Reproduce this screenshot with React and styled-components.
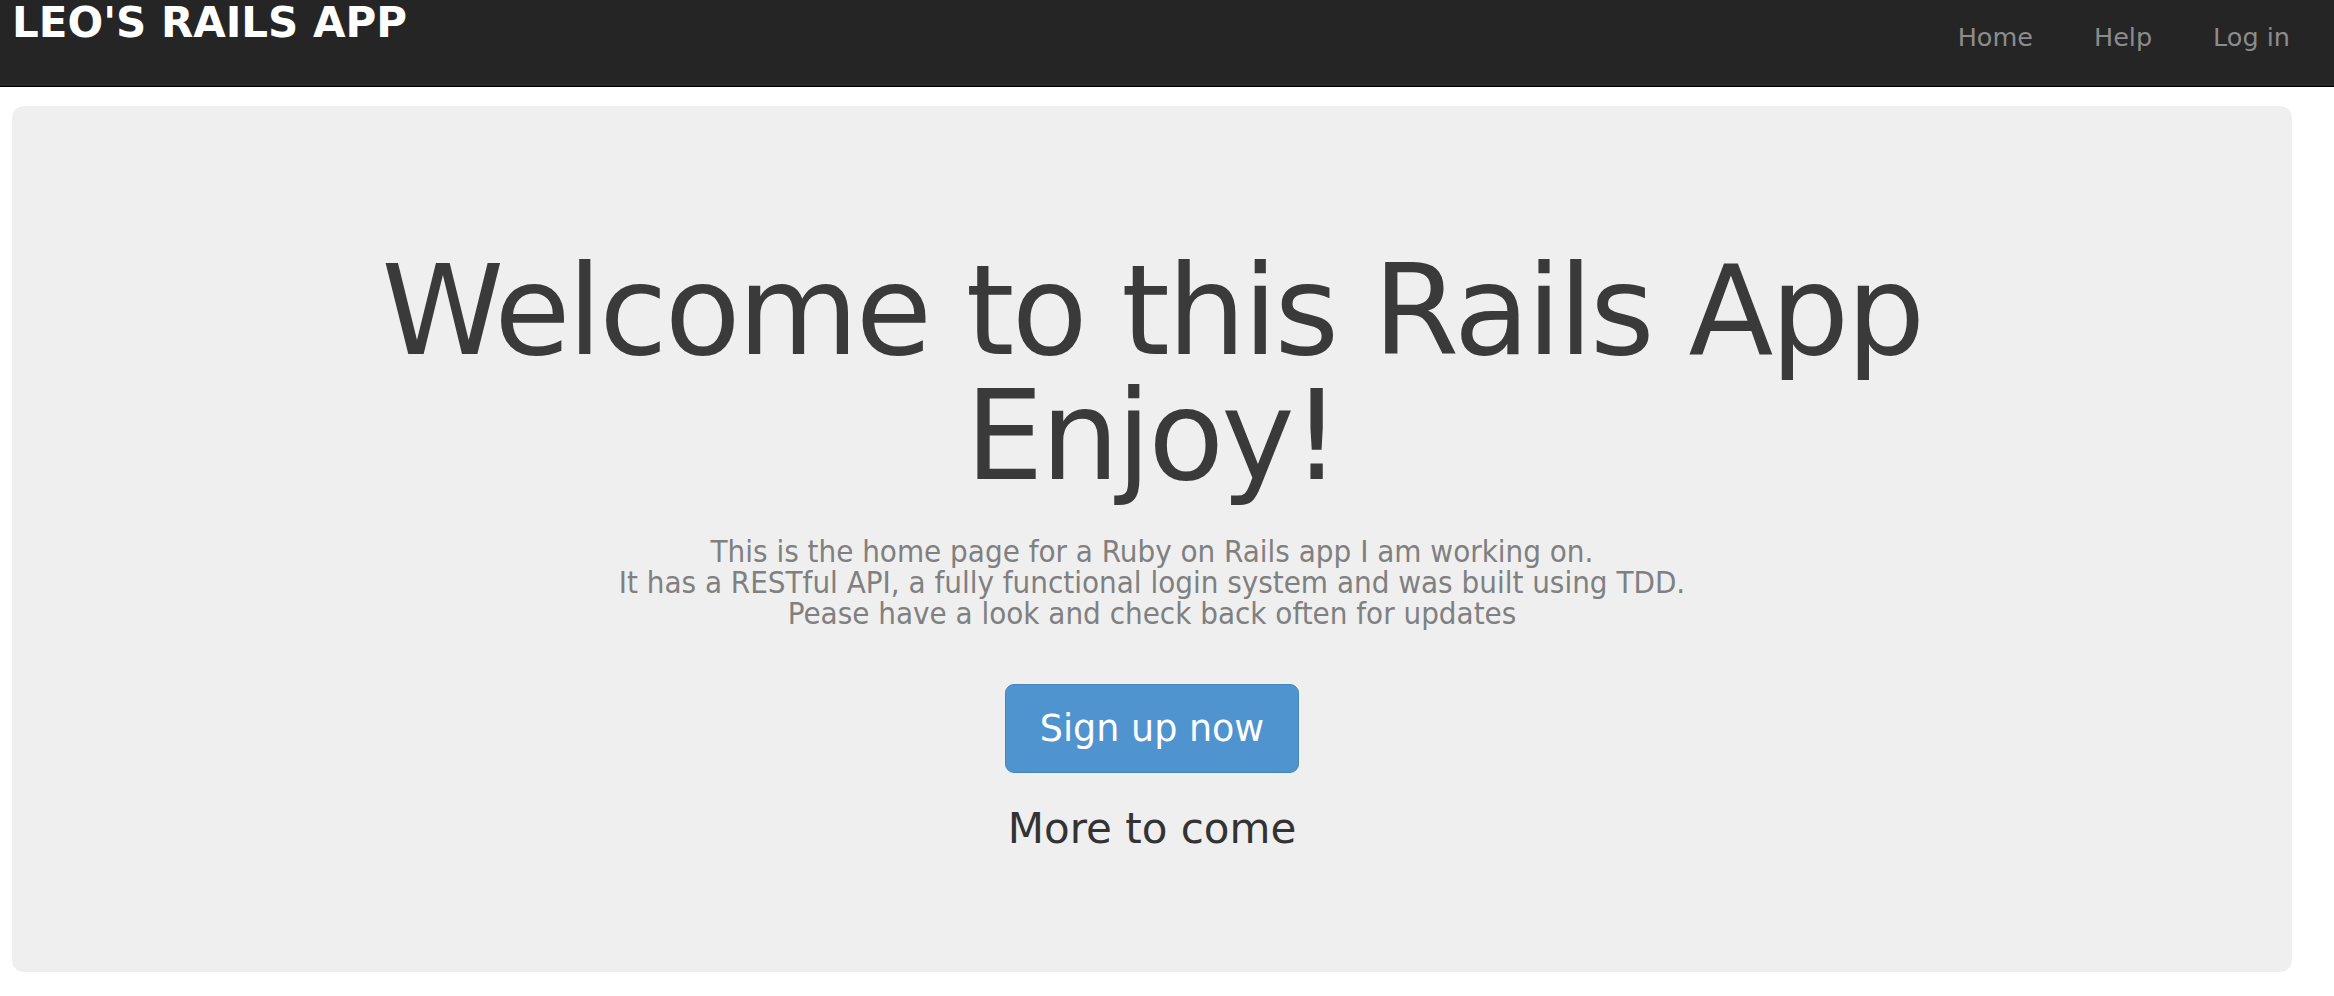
import styled, { createGlobalStyle } from "styled-components";

const GlobalStyle = createGlobalStyle`
    body{
        margin: 0;
        background: #ffffff;
        font-family: "DejaVu Sans", Verdana, sans-serif;
    }
`;

const Header = styled.header`
    display: flex;
    justify-content: space-between;
    align-items: flex-start;
    height: 86px;
    background: #252525;
    border-bottom: 1px solid #000000;
    padding: 0 44px 0 12px;
`;

const Logo = styled.a`
    padding-top: 2px;
    font-size: 42px;
    line-height: 1;
    font-weight: bold;
    color: #ffffff;
    text-decoration: none;
    text-transform: uppercase;
`;

const Nav = styled.nav`
    display: flex;
    gap: 61px;
    padding-top: 25px;
`;

const NavLink = styled.a`
    font-size: 25.5px;
    line-height: 1;
    color: #8c8c8c;
    text-decoration: none;
`;

const Jumbotron = styled.section`
    display: flex;
    flex-direction: column;
    align-items: center;
    margin: 19px 42px 0 12px;
    padding: 143px 0 118px;
    background: #efefef;
    border-radius: 12px;
    text-align: center;
`;

const Title = styled.h1`
    margin: 0;
    font-size: 124px;
    line-height: 125px;
    font-weight: normal;
    letter-spacing: -2.8px;
    color: #3a3a3a;
`;

const Intro = styled.p`
    margin: 37px 0 0;
    font-family: "DejaVu Sans Condensed", "DejaVu Sans", sans-serif;
    font-stretch: condensed;
    font-size: 31px;
    line-height: 31px;
    color: #808080;
`;

const SignUp = styled.a`
    display: flex;
    align-items: center;
    justify-content: center;
    box-sizing: border-box;
    width: 294px;
    height: 89px;
    margin-top: 55px;
    background: #4f94cf;
    border: 1px solid #4586bd;
    border-radius: 9px;
    font-size: 36.5px;
    color: #ffffff;
    text-decoration: none;
`;

const Note = styled.h3`
    margin: 31px 0 0;
    font-size: 42px;
    line-height: 1.2;
    font-weight: normal;
    color: #333333;
`;

const App = () => {
    return(
        <>
            <GlobalStyle />
            <Header>
                <Logo href="#">Leo's Rails App</Logo>
                <Nav>
                    <NavLink href="#">Home</NavLink>
                    <NavLink href="#">Help</NavLink>
                    <NavLink href="#">Log in</NavLink>
                </Nav>
            </Header>
            <Jumbotron>
                <Title>Welcome to this Rails App<br />Enjoy!</Title>
                <Intro>
                    This is the home page for a Ruby on Rails app I am working on.<br />
                    It has a RESTful API, a fully functional login system and was built using TDD.<br />
                    Pease have a look and check back often for updates
                </Intro>
                <SignUp href="#">Sign up now</SignUp>
                <Note>More to come</Note>
            </Jumbotron>
        </>
    )
}

export default App;
